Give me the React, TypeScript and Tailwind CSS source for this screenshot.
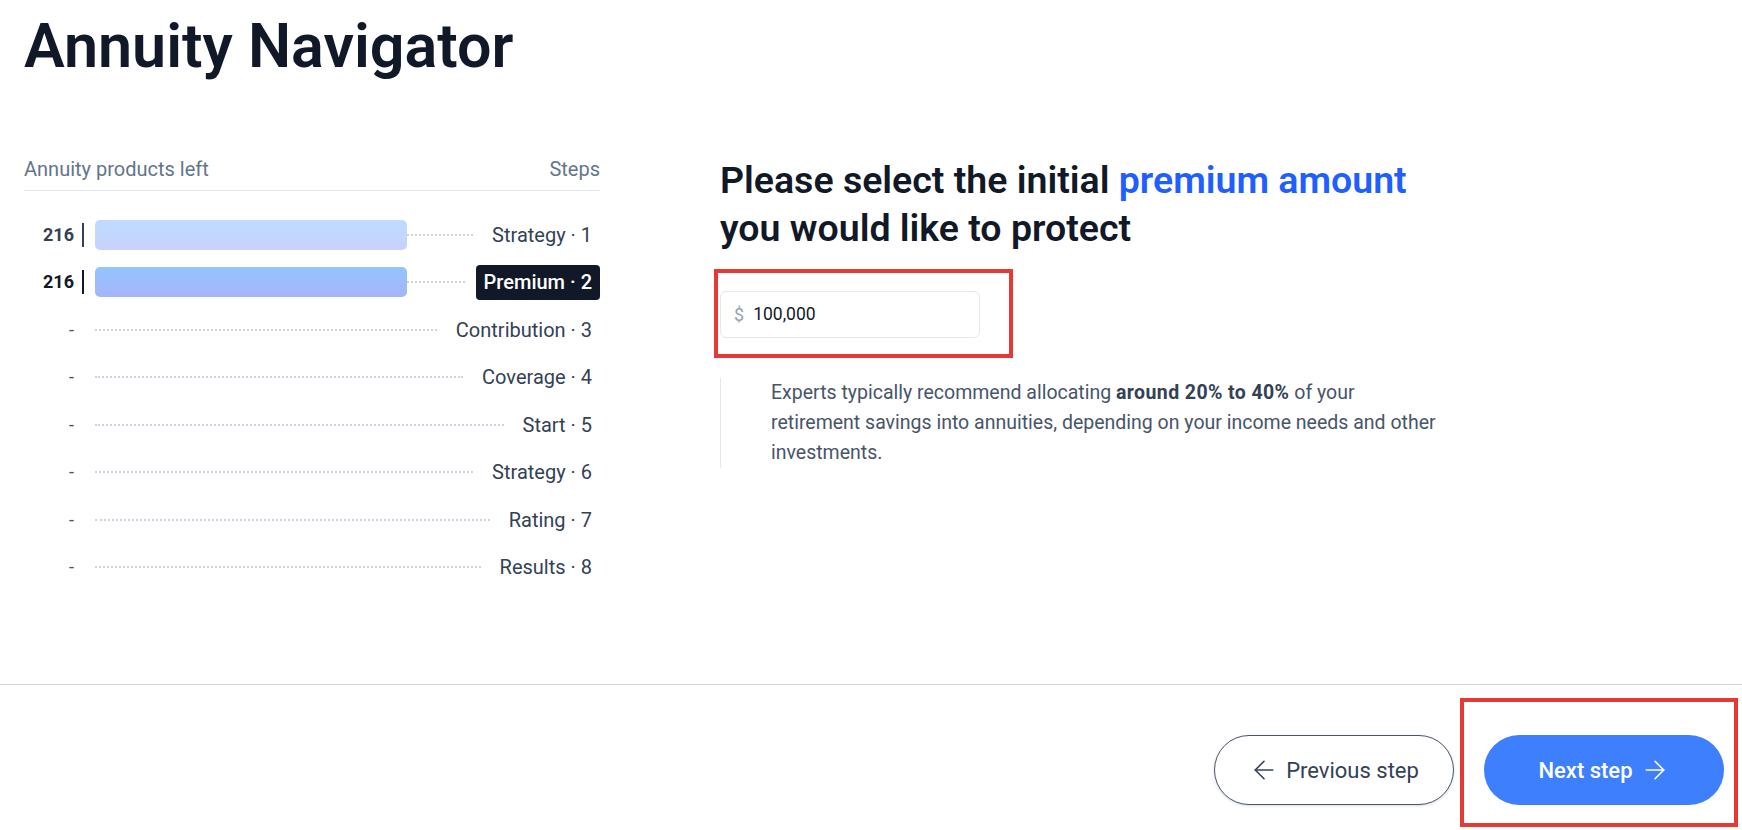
import { ArrowLeft, ArrowRight } from 'lucide-react'

type Step = { label: string; count: number | null; current?: boolean }

const STEPS: Step[] = [
  { label: 'Strategy · 1', count: 216 },
  { label: 'Premium · 2', count: 216, current: true },
  { label: 'Contribution · 3', count: null },
  { label: 'Coverage · 4', count: null },
  { label: 'Start · 5', count: null },
  { label: 'Strategy · 6', count: null },
  { label: 'Rating · 7', count: null },
  { label: 'Results · 8', count: null },
]

function StepRow({ step }: { step: Step }) {
  const hasCount = step.count !== null
  return (
    <div className="flex items-center h-[47.5px]">
      <span
        className={`w-[50px] text-right text-[18px] leading-none ${
          hasCount ? (step.current ? 'font-bold text-[#111827]' : 'font-bold text-[#334155]') : 'text-[#475569]'
        }`}
      >
        {hasCount ? step.count : '-'}
      </span>
      <span
        className={`ml-[8px] w-[2px] h-[24px] ${
          hasCount ? (step.current ? 'bg-[#111827]' : 'bg-[#334155]') : 'bg-transparent'
        }`}
      />
      {hasCount && (
        <div
          className={`ml-[11px] w-[312px] h-[30px] rounded-[5px] bg-gradient-to-b ${
            step.current ? 'from-[#93c5fd] to-[#a5b4fc]' : 'from-[#bfdbfe] to-[#c7d2fe]'
          }`}
        />
      )}
      <div className={`flex-1 border-t-2 border-dotted border-[#cbd5e1] mr-[11px] ${hasCount ? '' : 'ml-[11px]'}`} />
      <span
        className={`px-2 h-[35px] flex items-center rounded-[4px] text-[20px] leading-none ${
          step.current ? 'bg-[#111827] text-white font-medium' : 'text-[#334155]'
        }`}
      >
        {step.label}
      </span>
    </div>
  )
}

export default function App() {
  return (
    <div className="h-screen bg-white flex flex-col font-['Roboto',_'Liberation_Sans',_sans-serif] text-[#111827]">
      <main className="flex-1 px-6">
        <h1 className="pt-[16px] text-[61px] leading-[60px] font-semibold text-[#111827]">
          Annuity Navigator
        </h1>

        <div className="flex mt-[81px]">
          {/* Progress by step */}
          <aside className="w-[576px] shrink-0">
            <div className="flex justify-between pb-[9px] border-b border-[#e2e8f0] text-[20px] leading-[24px] text-[#64748b]">
              <span>Annuity products left</span>
              <span>Steps</span>
            </div>
            <div className="mt-[20px] flex flex-col">
              {STEPS.map((s) => (
                <StepRow key={s.label} step={s} />
              ))}
            </div>
          </aside>

          {/* Question */}
          <section className="ml-[120px] max-w-[760px]">
            <h2 className="text-[37.5px] leading-[48px] font-semibold text-[#111827] -mt-[1px]">
              Please select the initial <span className="text-[#1f5eff]">premium amount</span>
              <br />
              you would like to protect
            </h2>

            <div className="relative mt-[39px] w-[260px]">
              <label className="flex items-center h-[47px] rounded-[6px] border border-[#e2e8f0] px-[13px] gap-[9px] bg-white">
                <span className="text-[18px] text-[#94a3b8]">$</span>
                <input
                  defaultValue="100,000"
                  className="w-full outline-none text-[17.5px] text-[#111827] bg-transparent"
                />
              </label>
              <div className="absolute -left-[6px] -top-[22px] w-[299px] h-[89px] border-4 border-[#e53935] pointer-events-none" />
            </div>

            <div className="mt-[40px] border-l border-[#e5e7eb] pl-[50px] w-[730px]">
              <p className="text-[19.5px] leading-[30px] text-[#475569]">
                Experts typically recommend allocating{' '}
                <strong className="font-bold text-[#334155] tracking-[0.4px]">around 20% to 40%</strong> of your
                <br />
                retirement savings into annuities, depending on your income needs and other
                <br />
                investments.
              </p>
            </div>
          </section>
        </div>
      </main>

      <footer className="h-[146px] shrink-0 border-t border-[#cbd5e1] flex justify-end gap-[30px] pt-[50px] pr-[18px]">
        <button className="w-[240px] h-[70px] rounded-full border border-[#475569] shadow-[0_1px_3px_rgba(15,23,42,0.15)] flex items-center justify-center gap-[7px] text-[22px] text-[#334155] bg-white">
          <ArrowLeft size={30} strokeWidth={1.3} />
          Previous step
        </button>
        <div className="relative">
          <button className="w-[240px] h-[70px] rounded-full bg-[#3e7ffd] flex items-center justify-center gap-[7px] text-[22px] font-medium text-white">
            Next step
            <ArrowRight size={30} strokeWidth={1.3} />
          </button>
          <div className="absolute -left-[24px] -top-[37px] w-[278px] h-[129px] border-4 border-[#e53935] pointer-events-none" />
        </div>
      </footer>
    </div>
  )
}
